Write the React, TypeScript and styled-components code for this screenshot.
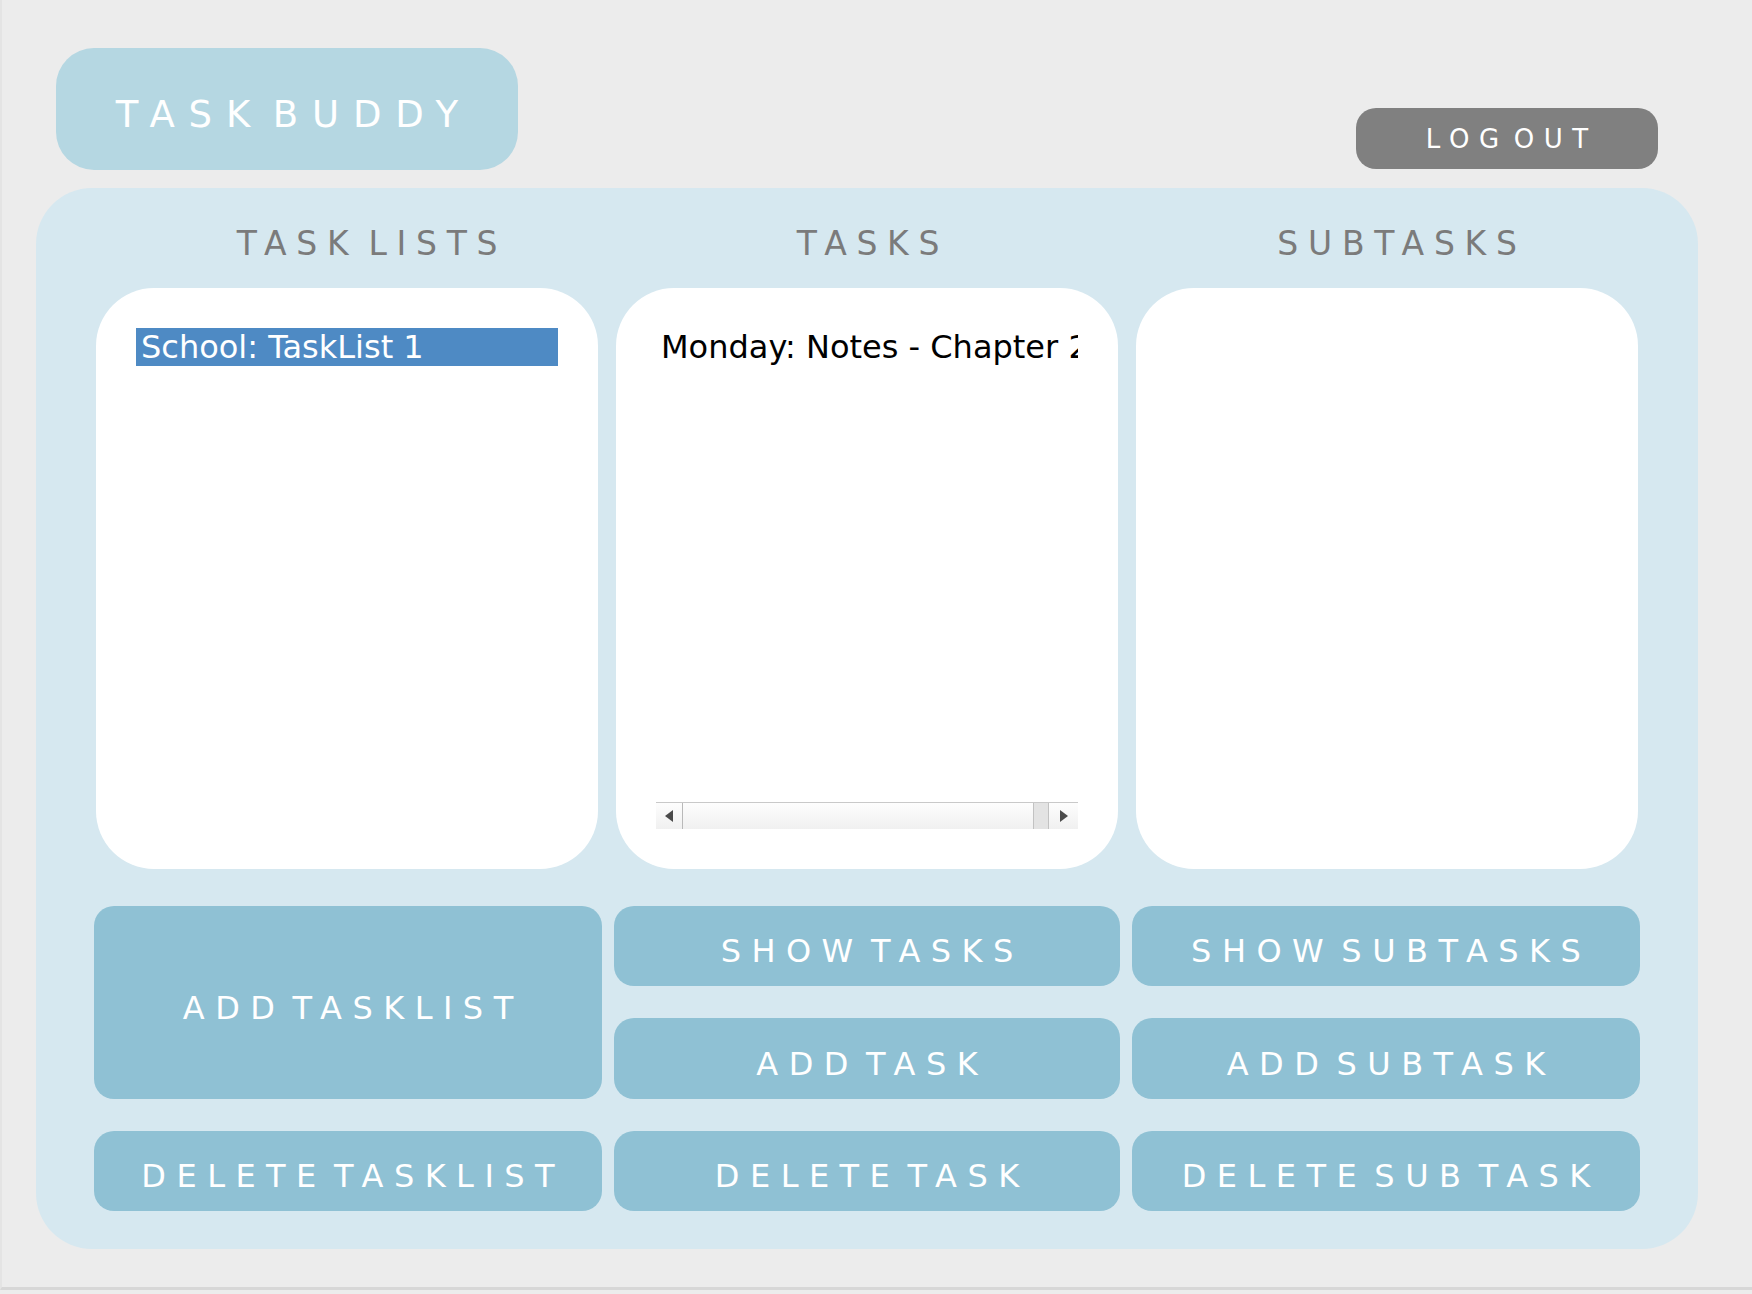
import React from "react";
import styled, { createGlobalStyle } from "styled-components";

const GlobalStyle = createGlobalStyle`
  html, body {
    margin: 0;
    padding: 0;
    background: #ececec;
    font-family: "DejaVu Sans", "Liberation Sans", sans-serif;
  }
  * { box-sizing: border-box; }
`;

const Window = styled.div`
  width: 1752px;
  height: 1290px;
  background: #ececec;
  border-left: 2px solid #e4e4e4;
  border-bottom: 3px solid #d7d7d7;
  display: flex;
  flex-direction: column;
`;

const Header = styled.header`
  display: flex;
  justify-content: space-between;
  align-items: flex-end;
  padding: 48px 94px 0 54px;
`;

const TitlePill = styled.div`
  width: 462px;
  height: 122px;
  border-radius: 38px;
  background: #b5d7e2;
  color: #ffffff;
  font-size: 37px;
  letter-spacing: 0.375em;
  word-spacing: -0.46em;
  padding: 10px 0 0 0.375em;
  display: flex;
  align-items: center;
  justify-content: center;
  white-space: nowrap;
`;

const LogoutButton = styled.button`
  width: 302px;
  height: 61px;
  margin-bottom: 1px;
  border: none;
  border-radius: 20px;
  background: #808080;
  color: #ffffff;
  font-family: inherit;
  font-size: 26px;
  letter-spacing: 0.37em;
  word-spacing: -0.5em;
  padding: 0 0 0 0.37em;
  display: flex;
  align-items: center;
  justify-content: center;
  white-space: nowrap;
  cursor: pointer;
`;

const Panel = styled.main`
  margin: 18px 54px 0 34px;
  height: 1061px;
  border-radius: 56px;
  background: #d6e8f0;
  padding: 36px 58px 0 58px;
  display: flex;
  flex-direction: column;
`;

const ColumnRow = styled.div`
  display: grid;
  grid-template-columns: 502px 502px 502px;
  column-gap: 18px;
  padding: 0 2px;
`;

const ColumnLabel = styled.div<{ $shift: number }>`
  height: 40px;
  line-height: 40px;
  font-size: 33px;
  letter-spacing: 0.295em;
  word-spacing: -0.31em;
  color: #7b7b7b;
  text-align: center;
  padding-left: ${(p) => p.$shift * 2}px;
  white-space: nowrap;
`;

const BoxRow = styled(ColumnRow)`
  margin-top: 24px;
`;

const ListBox = styled.section`
  height: 581px;
  border-radius: 58px;
  background: #ffffff;
  padding: 40px;
`;

const ListView = styled.div`
  height: 100%;
  overflow: hidden;
  display: flex;
  flex-direction: column;
`;

const ListItems = styled.ul`
  flex: 1;
  margin: 0;
  padding: 0;
  list-style: none;
  overflow: hidden;
`;

const ListRow = styled.li<{ $selected?: boolean }>`
  height: 38px;
  line-height: 38px;
  font-size: 32px;
  padding-left: 5px;
  white-space: nowrap;
  color: ${(p) => (p.$selected ? "#ffffff" : "#000000")};
  background: ${(p) => (p.$selected ? "#4e8ac4" : "transparent")};
`;

const HScrollBar = styled.div`
  height: 27px;
  flex: none;
  display: flex;
  border-top: 1px solid #c9c9c9;
  background: linear-gradient(#fdfdfd, #f0f0f0);
`;

const ScrollArrow = styled.div<{ $side: "left" | "right" }>`
  width: ${(p) => (p.$side === "left" ? 27 : 29)}px;
  display: flex;
  align-items: center;
  justify-content: center;
  border-right: ${(p) => (p.$side === "left" ? "1px solid #b9b9b9" : "none")};
  &::before {
    content: "";
    width: 0;
    height: 0;
    border-top: 6px solid transparent;
    border-bottom: 6px solid transparent;
    ${(p) =>
      p.$side === "left"
        ? "border-right: 8px solid #4a4a4a;"
        : "border-left: 8px solid #4a4a4a;"}
  }
`;

const ScrollTrack = styled.div`
  flex: 1;
  display: flex;
  justify-content: flex-end;
`;

const ScrollThumb = styled.div`
  width: 16px;
  background: #e3e3e3;
  border-left: 1px solid #c2c2c2;
  border-right: 1px solid #c2c2c2;
`;

const ButtonGrid = styled.div`
  margin-top: 37px;
  display: grid;
  grid-template-columns: 508px 506px 508px;
  grid-template-rows: 80px 81px 80px;
  column-gap: 12px;
  row-gap: 32px;
`;

const ActionButton = styled.button<{ $tall?: boolean }>`
  grid-row: ${(p) => (p.$tall ? "span 2" : "auto")};
  border: none;
  border-radius: 20px;
  background: #8fc1d4;
  color: #ffffff;
  font-family: inherit;
  font-size: 32px;
  letter-spacing: 0.327em;
  word-spacing: -0.42em;
  padding: 10px 0 0 0.327em;
  display: flex;
  align-items: center;
  justify-content: center;
  white-space: nowrap;
  cursor: pointer;
`;

export default function App() {
  return (
    <>
      <GlobalStyle />
      <Window>
        <Header>
          <TitlePill>TASK BUDDY</TitlePill>
          <LogoutButton>LOG OUT</LogoutButton>
        </Header>
        <Panel>
          <ColumnRow>
            <ColumnLabel $shift={25}>TASK LISTS</ColumnLabel>
            <ColumnLabel $shift={6}>TASKS</ColumnLabel>
            <ColumnLabel $shift={15}>SUBTASKS</ColumnLabel>
          </ColumnRow>
          <BoxRow>
            <ListBox>
              <ListView>
                <ListItems>
                  <ListRow $selected>School: TaskList 1</ListRow>
                </ListItems>
              </ListView>
            </ListBox>
            <ListBox>
              <ListView>
                <ListItems>
                  <ListRow>Monday: Notes - Chapter 2</ListRow>
                </ListItems>
                <HScrollBar>
                  <ScrollArrow $side="left" />
                  <ScrollTrack>
                    <ScrollThumb />
                  </ScrollTrack>
                  <ScrollArrow $side="right" />
                </HScrollBar>
              </ListView>
            </ListBox>
            <ListBox>
              <ListView />
            </ListBox>
          </BoxRow>
          <ButtonGrid>
            <ActionButton $tall>ADD TASKLIST</ActionButton>
            <ActionButton>SHOW TASKS</ActionButton>
            <ActionButton>SHOW SUBTASKS</ActionButton>
            <ActionButton>ADD TASK</ActionButton>
            <ActionButton>ADD SUBTASK</ActionButton>
            <ActionButton>DELETE TASKLIST</ActionButton>
            <ActionButton>DELETE TASK</ActionButton>
            <ActionButton>DELETE SUB TASK</ActionButton>
          </ButtonGrid>
        </Panel>
      </Window>
    </>
  );
}
